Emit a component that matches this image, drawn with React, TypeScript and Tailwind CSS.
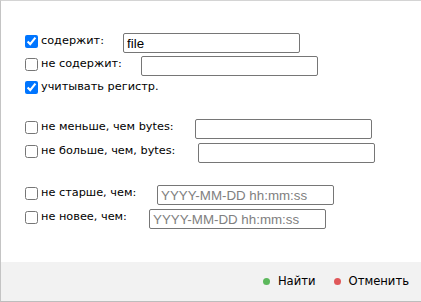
import { ReactNode } from "react";

interface Row {
  label: string;
  checked?: boolean;
  /** ширина блока подписи, чтобы поле встало на своё место */
  labelW?: string;
  value?: string;
  placeholder?: string;
  tall?: boolean;
}

const GROUPS: Row[][] = [
  [
    { label: "содержит:", checked: true, labelW: "w-[82px]", value: "file" },
    { label: "не содержит:", labelW: "w-[100px]", value: "" },
    { label: "учитывать регистр.", checked: true },
  ],
  [
    { label: "не меньше, чем bytes:", labelW: "w-[154px]", value: "", tall: true },
    { label: "не больше, чем, bytes:", labelW: "w-[157px]", value: "", tall: true },
  ],
  [
    { label: "не старше, чем:", labelW: "w-[116px]", placeholder: "YYYY-MM-DD hh:mm:ss", tall: true },
    { label: "не новее, чем:", labelW: "w-[108px]", placeholder: "YYYY-MM-DD hh:mm:ss", tall: true },
  ],
];

function Field({ row }: { row: Row }) {
  const hasInput = row.value !== undefined || row.placeholder !== undefined;
  return (
    <div className={`flex items-center ${row.tall ? "h-[24px]" : "h-[23px]"}`}>
      <input type="checkbox" defaultChecked={row.checked} className="h-[13px] w-[13px]" />
      <span className={`ml-[3px] whitespace-nowrap ${row.labelW ?? ""}`}>{row.label}</span>
      {hasInput && (
        <input
          type="text"
          defaultValue={row.value}
          placeholder={row.placeholder}
          className={`h-[20px] w-[177px] rounded-[2px] border border-[#767676] bg-white px-[3px] font-['Liberation_Sans',Arial,sans-serif] text-[13.33px] text-black outline-none placeholder:text-[#808080] ${
            row.tall ? "mt-[4px]" : "mt-[3px]"
          }`}
        />
      )}
    </div>
  );
}

function Dot({ color, children }: { color: string; children: ReactNode }) {
  return (
    <button type="button" className="flex items-center gap-[8px]">
      <span className={`h-[7px] w-[7px] shrink-0 rounded-full ${color}`} />
      {children}
    </button>
  );
}

export default function App() {
  return (
    <div className="flex h-[302px] w-[421px] flex-col border-t border-b border-l border-t-[#d4d4d4] border-b-[#bdbdbd] border-l-[#c4c4c4] bg-white font-['DejaVu_Sans',Verdana,sans-serif] text-[11.3px] text-black">
      <div className="flex flex-1 flex-col pl-[24px] pt-[29px]">
        <div className="flex flex-col">
          {GROUPS[0].map((r) => (
            <Field key={r.label} row={r} />
          ))}
        </div>
        <div className="mt-[16px] flex flex-col">
          {GROUPS[1].map((r) => (
            <Field key={r.label} row={r} />
          ))}
        </div>
        <div className="mt-[18px] flex flex-col">
          {GROUPS[2].map((r) => (
            <Field key={r.label} row={r} />
          ))}
        </div>
      </div>

      {/* кнопки */}
      <div className="flex h-[39px] items-center justify-end gap-[18px] bg-[#f2f2f2] pr-[12px] text-[11.6px]">
        <Dot color="bg-[#5cb85c]">Найти</Dot>
        <Dot color="bg-[#e0585a]">Отменить</Dot>
      </div>
    </div>
  );
}
